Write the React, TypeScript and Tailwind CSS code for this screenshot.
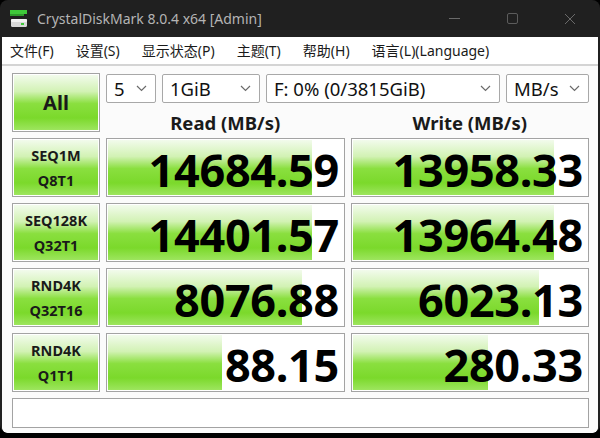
import React from "react";

const green =
  "bg-[linear-gradient(to_bottom,#f2fbec_0%,#d2f2b4_30%,#8adf3f_52%,#7bd92b_78%,#9de55e_100%)]";

interface Result {
  label: [string, string];
  read: string;
  readPct: number;
  write: string;
  writePct: number;
}

const results: Result[] = [
  { label: ["SEQ1M", "Q8T1"], read: "14684.59", readPct: 87, write: "13958.33", writePct: 86 },
  { label: ["SEQ128K", "Q32T1"], read: "14401.57", readPct: 87, write: "13964.48", writePct: 86 },
  { label: ["RND4K", "Q32T16"], read: "8076.88", readPct: 82.5, write: "6023.13", writePct: 79.5 },
  { label: ["RND4K", "Q1T1"], read: "88.15", readPct: 48.5, write: "280.33", writePct: 57.7 },
];

const menu = ["文件(F)", "设置(S)", "显示状态(P)", "主题(T)", "帮助(H)", "语言(L)(Language)"];

const Chevron: React.FC = () => (
  <svg width="11" height="7" viewBox="0 0 11 7" className="shrink-0">
    <path d="M1 1l4.5 4.5L10 1" fill="none" stroke="#6b6b6b" strokeWidth="1.2" />
  </svg>
);

const Select: React.FC<{ value: string; width: string }> = ({ value, width }) => (
  <div
    className={`${width} h-[29px] flex items-center justify-between bg-white border border-[#a8a8a8] rounded-[2px] pl-[7px] pr-[8px] text-[18.5px] text-[#111]`}
  >
    <span>{value}</span>
    <Chevron />
  </div>
);

const ResultBox: React.FC<{ value: string; pct: number }> = ({ value, pct }) => (
  <div className="h-[59px] border border-[#a3a3a3] bg-white p-[1px]">
    <div className="relative h-full">
      <div className={`h-full ${green}`} style={{ width: `${pct}%` }} />
      <div className="absolute inset-0 flex items-center justify-end pr-[4px] pt-[3px] text-[45px] font-bold text-black leading-none tracking-[-0.3px]">
        {value}
      </div>
    </div>
  </div>
);

const LabelBox: React.FC<{ lines: [string, string] }> = ({ lines }) => (
  <div className="h-[59px] border border-[#a3a3a3] bg-white p-[1px]">
    <div
      className={`h-full ${green} flex flex-col items-center justify-center text-[14.5px] font-bold text-[#1a1a1a] leading-[25px]`}
    >
      <span>{lines[0]}</span>
      <span>{lines[1]}</span>
    </div>
  </div>
);

const DiskIcon: React.FC = () => (
  <svg width="20" height="20" viewBox="0 0 20 20">
    <rect x="1" y="1" width="17" height="4" fill="#3fc83a" />
    <rect x="1" y="5" width="14" height="2" fill="#2e9a2b" />
    <rect x="2" y="10" width="16" height="8" rx="1.5" fill="#d8d8d8" />
    <rect x="2" y="10" width="16" height="3" rx="1" fill="#f2f2f2" />
    <rect x="12" y="14" width="3" height="2" fill="#3fc83a" />
  </svg>
);

export default function App() {
  return (
    <div className="w-[600px] h-[438px] bg-black overflow-hidden font-['Noto_Sans','Noto_Sans_CJK_SC',sans-serif]">
      <div className="h-[433px] flex flex-col rounded-[8px] overflow-hidden bg-[#202020]">
        {/* Title bar */}
        <div className="h-[37px] shrink-0 flex items-center text-[#b4b4b4]">
          <div className="ml-[9px] mr-[8px] flex items-center">
            <DiskIcon />
          </div>
          <span className="text-[14px]">CrystalDiskMark 8.0.4 x64 [Admin]</span>
          <div className="ml-auto flex items-center h-full">
            <div className="w-[58px] flex justify-center">
              <svg width="11" height="2" viewBox="0 0 11 2">
                <rect width="11" height="1" fill="#6a6a6a" />
              </svg>
            </div>
            <div className="w-[58px] flex justify-center">
              <svg width="11" height="11" viewBox="0 0 11 11">
                <rect x="0.5" y="0.5" width="10" height="10" rx="1.5" fill="none" stroke="#5c5c5c" />
              </svg>
            </div>
            <div className="w-[58px] flex justify-center mr-[1px]">
              <svg width="12" height="12" viewBox="0 0 12 12">
                <path d="M1 1l10 10M11 1L1 11" stroke="#6a6a6a" strokeWidth="1" />
              </svg>
            </div>
          </div>
        </div>

        <div className="flex-1 flex flex-col mx-[2px] bg-white rounded-b-[6px] overflow-hidden">
          {/* Menu */}
          <div className="h-[27px] shrink-0 flex items-center gap-[22px] pl-[8px] text-[14px] text-[#1a1a1a]">
            {menu.map((m) => (
              <span key={m}>{m}</span>
            ))}
          </div>
          <div className="h-[2px] bg-[#d4d4d4]" />

          {/* Content */}
          <div className="flex-1 bg-[#fbfbfb] px-[10px] pt-[7px]">
            <div className="grid grid-cols-[88px_239px_238px] gap-x-[6px] gap-y-[6px]">
              <div className="h-[59px] border border-[#a3a3a3] bg-white p-[1px]">
                <div className={`h-full ${green} flex items-center justify-center text-[20px] font-bold text-[#1a1a1a]`}>
                  All
                </div>
              </div>
              <div className="col-span-2 flex flex-col">
                <div className="flex gap-[6px] pt-[1px]">
                  <Select value="5" width="w-[50px]" />
                  <Select value="1GiB" width="w-[98px]" />
                  <Select value="F: 0% (0/3815GiB)" width="w-[234px]" />
                  <Select value="MB/s" width="w-[83px]" />
                </div>
                <div className="flex-1 grid grid-cols-2 gap-x-[6px] items-end text-[18.5px] leading-none font-bold text-[#1a1a1a]">
                  <div className="text-center">Read (MB/s)</div>
                  <div className="text-center">Write (MB/s)</div>
                </div>
              </div>

              {results.map((r) => (
                <React.Fragment key={r.label.join("-")}>
                  <LabelBox lines={r.label} />
                  <ResultBox value={r.read} pct={r.readPct} />
                  <ResultBox value={r.write} pct={r.writePct} />
                </React.Fragment>
              ))}

              <div className="col-span-3 h-[30px] border border-[#a3a3a3] bg-white" />
            </div>
          </div>
        </div>
      </div>
    </div>
  );
}
